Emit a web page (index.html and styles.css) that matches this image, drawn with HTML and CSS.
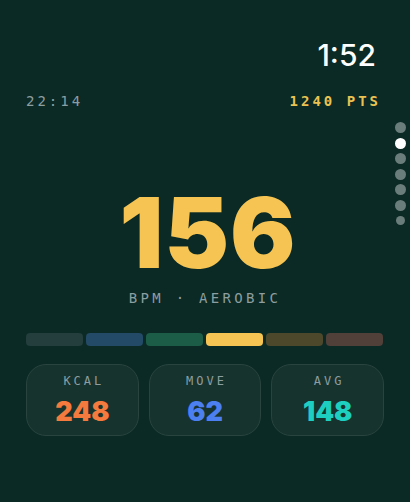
FILE: index.html
```html
<!DOCTYPE html>
<html lang="en">
<head>
    <meta charset="UTF-8">
    <meta name="viewport" content="width=device-width, initial-scale=1.0">
    <title>Heart Rate</title>
    <link rel="stylesheet" href="styles.css">
</head>
<body>
    <div class="screen">
        <div class="clock">1:52</div>

        <div class="status">
            <span class="elapsed">22:14</span>
            <span class="points">1240 PTS</span>
        </div>

        <div class="pager">
            <span class="dot"></span>
            <span class="dot active"></span>
            <span class="dot"></span>
            <span class="dot"></span>
            <span class="dot"></span>
            <span class="dot"></span>
            <span class="dot small"></span>
        </div>

        <div class="heart">
            <div class="bpm">156</div>
            <div class="zone">BPM · AEROBIC</div>
        </div>

        <div class="zones">
            <span class="bar z1"></span>
            <span class="bar z2"></span>
            <span class="bar z3"></span>
            <span class="bar z4"></span>
            <span class="bar z5"></span>
            <span class="bar z6"></span>
        </div>

        <div class="stats">
            <div class="stat">
                <div class="label">KCAL</div>
                <div class="value kcal">248</div>
            </div>
            <div class="stat">
                <div class="label">MOVE</div>
                <div class="value move">62</div>
            </div>
            <div class="stat">
                <div class="label">AVG</div>
                <div class="value avg">148</div>
            </div>
        </div>
    </div>
</body>
</html>
```

FILE: styles.css
```css
html, body {
    margin: 0;
    padding: 0;
    background-color: #0b2a25;
}

.screen {
    position: relative;
    width: 410px;
    height: 502px;
    box-sizing: border-box;
    padding: 0 26px 0 26px;
    font-family: 'Inter', 'Liberation Sans', sans-serif;
    color: #fff;
    display: flex;
    flex-direction: column;
}

.clock {
    align-self: flex-end;
    margin-top: 37px;
    margin-right: 8px;
    font-size: 30px;
    font-weight: 500;
    line-height: 36px;
}

.status {
    display: flex;
    justify-content: space-between;
    margin-top: 19px;
    margin-right: 3px;
    font-family: 'DejaVu Sans Mono', 'Liberation Mono', monospace;
    font-size: 14px;
    letter-spacing: 3px;
    line-height: 18px;
}

.elapsed {
    color: #8c9ea0;
}

.points {
    color: #e9c252;
    font-weight: bold;
}

.pager {
    position: absolute;
    right: 4px;
    top: 122px;
    display: flex;
    flex-direction: column;
    align-items: center;
    gap: 4.6px;
}

.dot {
    width: 11px;
    height: 11px;
    border-radius: 50%;
    background: #6a7d7a;
}

.dot.active {
    background: #fff;
}

.dot.small {
    width: 9px;
    height: 9px;
}

.heart {
    display: flex;
    flex-direction: column;
    align-items: center;
    margin-top: 76px;
}

.bpm {
    font-size: 97px;
    font-weight: 900;
    color: #f5c453;
    line-height: 94px;
    letter-spacing: 1px;
    margin-left: 6px;
}

.zone {
    margin-top: 9px;
    font-family: 'DejaVu Sans Mono', 'Liberation Mono', monospace;
    font-size: 14px;
    letter-spacing: 3.3px;
    color: #8c9ea0;
    line-height: 18px;
}

.zones {
    display: flex;
    gap: 3.6px;
    margin-top: 26px;
    margin-right: 1px;
}

.bar {
    flex: 1;
    height: 13px;
    border-radius: 4px;
}

.z1 { background: #233e3c; }
.z2 { background: #234a66; }
.z3 { background: #1c5d48; }
.z4 { background: #f5c453; }
.z5 { background: #4d482c; }
.z6 { background: #513f39; }

.stats {
    display: flex;
    gap: 10px;
    margin-top: 18px;
}

.stat {
    flex: 1;
    height: 72px;
    box-sizing: border-box;
    border: 1px solid #29443f;
    border-radius: 20px;
    background: #17332e;
    display: flex;
    flex-direction: column;
    align-items: center;
    padding-top: 9px;
}

.label {
    font-family: 'DejaVu Sans Mono', 'Liberation Mono', monospace;
    font-size: 12px;
    letter-spacing: 3px;
    margin-right: -3px;
    color: #8c9ea0;
    line-height: 15px;
}

.value {
    margin-top: 7px;
    font-size: 27px;
    font-weight: 900;
    line-height: 32px;
}

.kcal { color: #f47a3d; }
.move { color: #4c80f0; }
.avg { color: #1dcfc0; }
```
